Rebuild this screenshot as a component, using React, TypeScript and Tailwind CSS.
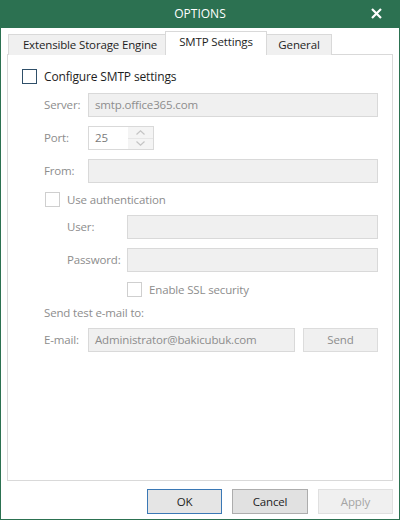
import React from "react";

const font = { fontFamily: '"Open Sans", "Noto Sans", Arial, sans-serif' };

function Box({ dark }: { dark?: boolean }) {
  return (
    <span
      className={
        "block h-[15px] w-[15px] shrink-0 border bg-white " +
        (dark ? "border-[#2f4f69]" : "border-[#cfcfcf]")
      }
    />
  );
}

function Field({ value, className }: { value?: string; className: string }) {
  return (
    <div
      className={
        "flex h-[24px] items-center border border-[#d9d9d9] bg-[#f0f0f0] px-[6px] text-[#8d8d8d] " + className
      }
    >
      {value}
    </div>
  );
}

export default function App() {
  return (
    <div
      className="flex h-[520px] w-[400px] flex-col bg-[#2c7151] px-px pb-px text-[11.5px] leading-none tracking-[-0.15px]"
      style={font}
    >
      {/* title bar */}
      <div className="relative flex h-[28px] shrink-0 items-center justify-center text-[12px] tracking-normal text-white">
        OPTIONS
        <svg className="absolute right-[17px] top-[8px]" width="11" height="11" viewBox="0 0 11 11">
          <path d="M1 1L10 10M10 1L1 10" stroke="#fff" strokeWidth="2.2" />
        </svg>
      </div>

      <div className="flex flex-1 flex-col bg-white px-[6px]">
        {/* tabs */}
        <div className="relative z-10 flex h-[27px] items-end pl-px">
          <div className="flex h-[21px] w-[158px] items-center justify-center border border-b-0 border-[#d9d9d9] bg-[#f0f0f0] pb-px pl-[6px] text-[#1e1e1e]">
            Extensible Storage Engine
          </div>
          <div className="-ml-px flex h-[24px] w-[102px] items-center justify-center border border-b-0 border-[#d9d9d9] bg-white pb-[3px] text-[#1e1e1e]">
            SMTP Settings
          </div>
          <div className="-ml-px flex h-[21px] w-[66px] items-center justify-center border border-b-0 border-[#d9d9d9] bg-[#f0f0f0] pb-px text-[#1e1e1e]">
            General
          </div>
        </div>

        {/* panel */}
        <div className="-mt-px flex h-[427px] flex-col border border-[#d9d9d9] px-[14px] text-[#8d8d8d]">
          <div className="mt-[14px] flex h-[15px] items-center gap-[7px] text-[#1e1e1e]">
            <Box dark />
            <span className="text-[12px]">Configure SMTP settings</span>
          </div>

          <div className="mt-[9px] flex items-center pl-[22px]">
            <span className="w-[44px]">Server:</span>
            <Field value="smtp.office365.com" className="flex-1" />
          </div>

          <div className="mt-[9px] flex items-center pl-[22px]">
            <span className="w-[44px]">Port:</span>
            <div className="flex h-[24px] w-[66px] border border-[#d9d9d9] bg-white">
              <span className="flex flex-1 items-center px-[6px] text-[#7a7a7a]">25</span>
              <div className="flex w-[25px] flex-col bg-[#f4f4f4]">
                <div className="flex flex-1 items-center justify-center">
                  <svg width="9" height="5" viewBox="0 0 9 5">
                    <path d="M0.5 4.5L4.5 0.8L8.5 4.5" fill="none" stroke="#c4c4c4" strokeWidth="1.2" />
                  </svg>
                </div>
                <div className="h-px bg-[#e6e6e6]" />
                <div className="flex flex-1 items-center justify-center">
                  <svg width="9" height="5" viewBox="0 0 9 5">
                    <path d="M0.5 0.5L4.5 4.2L8.5 0.5" fill="none" stroke="#c4c4c4" strokeWidth="1.2" />
                  </svg>
                </div>
              </div>
            </div>
          </div>

          <div className="mt-[9px] flex items-center pl-[22px]">
            <span className="w-[44px]">From:</span>
            <Field className="flex-1" />
          </div>

          <div className="mt-[9px] flex h-[15px] items-center gap-[7px] pl-[23px]">
            <Box />
            <span>Use authentication</span>
          </div>

          <div className="mt-[8px] flex items-center pl-[45px]">
            <span className="w-[60px]">User:</span>
            <Field className="flex-1" />
          </div>

          <div className="mt-[9px] flex items-center pl-[45px]">
            <span className="w-[60px]">Password:</span>
            <Field className="flex-1" />
          </div>

          <div className="mt-[10px] flex h-[15px] items-center gap-[7px] pl-[105px]">
            <Box />
            <span>Enable SSL security</span>
          </div>

          <div className="mt-[8px] flex h-[16px] items-center pl-[22px]">Send test e-mail to:</div>

          <div className="mt-[7px] flex items-center pl-[22px]">
            <span className="w-[44px]">E-mail:</span>
            <Field value="Administrator@bakicubuk.com" className="w-[207px]" />
            <div className="ml-auto flex h-[24px] w-[75px] items-center justify-center border border-[#dcdcdc] bg-[#f0f0f0] text-[#8d8d8d]">
              Send
            </div>
          </div>
        </div>

        {/* buttons */}
        <div className="flex flex-1 items-start justify-end gap-[10px] pt-[8px] text-[#1e1e1e]">
          <div className="flex h-[25px] w-[75px] items-center justify-center border border-[#3a78b5] bg-[#e5e5e5]">
            OK
          </div>
          <div className="flex h-[25px] w-[76px] items-center justify-center border border-[#adadad] bg-[#e1e1e1]">
            Cancel
          </div>
          <div className="flex h-[25px] w-[75px] items-center justify-center border border-[#e0e0e0] bg-[#f0f0f0] text-[#a5a5a5]">
            Apply
          </div>
        </div>
      </div>
    </div>
  );
}
